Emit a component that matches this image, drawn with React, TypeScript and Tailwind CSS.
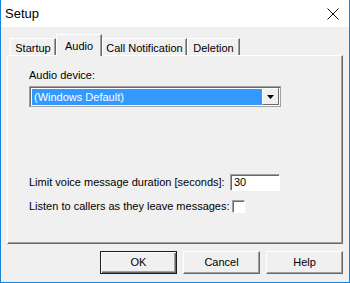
import React from "react"

const font = { fontFamily: '"Liberation Sans", Arial, sans-serif' }

function Tab({ label, selected, width }: { label: string; selected?: boolean; width: string }) {
  if (selected) {
    return (
      <div
        className={`relative z-10 -mb-px flex h-[22px] ${width} items-start justify-center border-l border-t border-r border-l-white border-t-white border-r-[#696969] bg-[#f0f0f0] pt-[3px] shadow-[inset_-1px_0_0_#a0a0a0]`}
      >
        {label}
      </div>
    )
  }
  return (
    <div
      className={`flex h-[17px] ${width} items-start justify-center border-l border-t border-r border-l-white border-t-white border-r-[#696969] pt-[1px] shadow-[inset_-1px_0_0_#a0a0a0]`}
    >
      {label}
    </div>
  )
}

function Button({ label, isDefault }: { label: string; isDefault?: boolean }) {
  return (
    <div
      className={
        isDefault
          ? "flex h-[23px] w-[77px] items-center justify-center border border-[#1b1b1b] shadow-[inset_1px_1px_0_#fff,inset_-1px_-1px_0_#696969,inset_-2px_-2px_0_#a0a0a0]"
          : "flex h-[23px] w-[77px] items-center justify-center border border-t-white border-l-white border-r-[#696969] border-b-[#696969] shadow-[inset_-1px_-1px_0_#a0a0a0]"
      }
    >
      {label}
    </div>
  )
}

export default function App() {
  return (
    <div
      className="flex h-[283px] w-[350px] flex-col border-x border-b border-[#1883d7] bg-[#f0f0f0] text-[11px] text-black"
      style={font}
    >
      {/* title bar */}
      <div className="flex h-[27px] shrink-0 items-center justify-between bg-white pl-[4px] pr-[10px]">
        <span className="text-[13px]">Setup</span>
        <svg width="12" height="12" viewBox="0 0 12 12" className="mt-px">
          <path d="M0.5 0.5 L11.5 11.5 M11.5 0.5 L0.5 11.5" stroke="#111" strokeWidth="1" />
        </svg>
      </div>

      <div className="flex flex-1 flex-col px-[6px] pt-[7px]">
        {/* tabs */}
        <div className="flex h-[21px] items-end pl-[3px]">
          <Tab label="Startup" width="w-[46px]" />
          <Tab label="Audio" selected width="w-[46px]" />
          <Tab label="Call Notification" width="w-[85px]" />
          <Tab label="Deletion" width="w-[53px]" />
        </div>

        {/* panel */}
        <div className="flex h-[189px] flex-col border border-t-white border-l-white border-r-[#696969] border-b-[#696969] pl-[21px] pt-[13px] shadow-[inset_-1px_-1px_0_#a0a0a0]">
          <div className="leading-[13px]">Audio device:</div>
          <div className="mt-[4px] flex h-[21px] w-[252px] border border-[#a0a0a0] bg-white p-px shadow-[inset_1px_1px_0_#696969]">
            <div className="ml-px mt-px flex h-[16px] flex-1 items-center bg-[#3399ff] pl-[2px] text-white">
              (Windows Default)
            </div>
            <div className="flex h-[17px] w-[17px] items-center justify-center border border-t-white border-l-white border-r-[#696969] border-b-[#696969] bg-[#f0f0f0]">
              <svg width="7" height="4" viewBox="0 0 7 4">
                <path d="M0 0 H7 L3.5 4 Z" fill="#000" />
              </svg>
            </div>
          </div>

          <div className="mt-[67px] flex h-[17px] items-center">
            <span className="w-[201px]">Limit voice message duration [seconds]:</span>
            <div className="flex h-[17px] w-[50px] items-center border border-t-[#a0a0a0] border-l-[#a0a0a0] border-r-white border-b-white bg-white pl-[3px] shadow-[inset_1px_1px_0_#696969]">
              30
            </div>
          </div>

          <div className="mt-[9px] flex h-[13px] items-center">
            <span className="w-[203px]">Listen to callers as they leave messages:</span>
            <div className="h-[13px] w-[13px] border border-t-[#a0a0a0] border-l-[#a0a0a0] border-r-white border-b-white bg-white shadow-[inset_1px_1px_0_#696969]" />
          </div>
        </div>

        {/* buttons */}
        <div className="mt-[7px] flex justify-end gap-[6px]">
          <Button label="OK" isDefault />
          <Button label="Cancel" />
          <Button label="Help" />
        </div>
      </div>
    </div>
  )
}
